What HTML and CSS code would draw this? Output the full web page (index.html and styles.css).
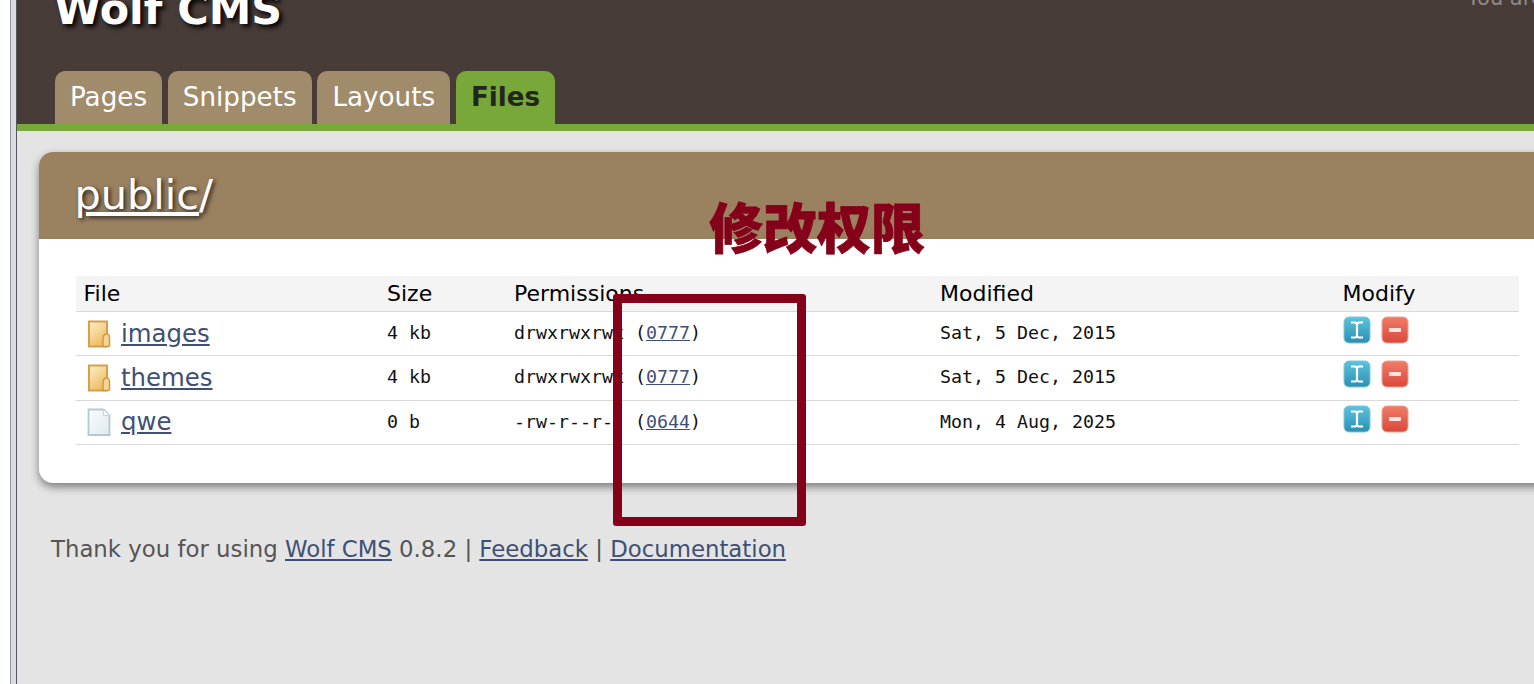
FILE: index.html
```html
<!DOCTYPE html>
<html>
<head>
  <meta charset="UTF-8">
  <title>Wolf CMS - Files</title>
  <link rel="stylesheet" href="styles.css">
</head>
<body>
<div class="gutter"></div>
<div class="page">
  <div class="header">
    <div class="top">
      <div class="logo">Wolf CMS</div>
      <div class="user">You are</div>
    </div>
    <div class="tabs">
      <a class="tab">Pages</a>
      <a class="tab">Snippets</a>
      <a class="tab">Layouts</a>
      <a class="tab current">Files</a>
    </div>
  </div>

  <div class="card">
    <h1 class="card-title"><a>public</a>/</h1>
    <div class="card-body">
      <table>
        <tr>
          <th class="c-file">File</th>
          <th class="c-size">Size</th>
          <th class="c-perm">Permissions</th>
          <th class="c-date">Modified</th>
          <th>Modify</th>
        </tr>
        <tr>
          <td><span class="name"><svg class="ficon" width="24" height="30" viewBox="0 0 24 30"><use href="#folder"/></svg><a>images</a></span></td>
          <td class="mono">4 kb</td>
          <td class="mono">drwxrwxrwx (<a>0777</a>)</td>
          <td class="mono">Sat, 5 Dec, 2015</td>
          <td><span class="actions"><svg class="aicon" width="28" height="28" viewBox="0 0 28 28"><use href="#rename"/></svg><svg class="aicon" width="28" height="28" viewBox="0 0 28 28"><use href="#remove"/></svg></span></td>
        </tr>
        <tr>
          <td><span class="name"><svg class="ficon" width="24" height="30" viewBox="0 0 24 30"><use href="#folder"/></svg><a>themes</a></span></td>
          <td class="mono">4 kb</td>
          <td class="mono">drwxrwxrwx (<a>0777</a>)</td>
          <td class="mono">Sat, 5 Dec, 2015</td>
          <td><span class="actions"><svg class="aicon" width="28" height="28" viewBox="0 0 28 28"><use href="#rename"/></svg><svg class="aicon" width="28" height="28" viewBox="0 0 28 28"><use href="#remove"/></svg></span></td>
        </tr>
        <tr>
          <td><span class="name"><svg class="ficon" width="24" height="30" viewBox="0 0 24 30"><use href="#doc"/></svg><a>qwe</a></span></td>
          <td class="mono">0 b</td>
          <td class="mono">-rw-r--r-- (<a>0644</a>)</td>
          <td class="mono">Mon, 4 Aug, 2025</td>
          <td><span class="actions"><svg class="aicon" width="28" height="28" viewBox="0 0 28 28"><use href="#rename"/></svg><svg class="aicon" width="28" height="28" viewBox="0 0 28 28"><use href="#remove"/></svg></span></td>
        </tr>
      </table>
    </div>
  </div>

  <p class="footer">Thank you for using <a>Wolf CMS</a> 0.8.2 | <a>Feedback</a> | <a>Documentation</a></p>
</div>

<!-- annotation drawn over the screenshot -->
<div class="note">修改权限</div>
<div class="note-box"></div>

<svg class="defs" width="0" height="0">
  <defs>
    <linearGradient id="gFolder" x1="0" y1="0" x2="0.6" y2="1">
      <stop offset="0" stop-color="#fdf0c8"/>
      <stop offset="1" stop-color="#edbb62"/>
    </linearGradient>
    <linearGradient id="gDoc" x1="0" y1="0" x2="1" y2="1">
      <stop offset="0" stop-color="#fbfcfd"/>
      <stop offset="1" stop-color="#dfe9ef"/>
    </linearGradient>
    <linearGradient id="gBlue" x1="0" y1="0" x2="0" y2="1">
      <stop offset="0" stop-color="#5cc4dc"/>
      <stop offset="1" stop-color="#2b8fb4"/>
    </linearGradient>
    <linearGradient id="gRed" x1="0" y1="0" x2="0" y2="1">
      <stop offset="0" stop-color="#f07c68"/>
      <stop offset="1" stop-color="#d9483a"/>
    </linearGradient>
    <symbol id="folder" viewBox="0 0 24 30">
      <path d="M2 2.500h18v25h-18z" fill="url(#gFolder)" stroke="#d6a045" stroke-width="2"/>
      <path d="M16 27.500v-7q0-5 3-5.500t3.500 3v8q0 1.500-2 1.500z" fill="#f3d596" stroke="#d19a3e" stroke-width="1.500"/>
    </symbol>
    <symbol id="doc" viewBox="0 0 24 30">
      <path d="M1.500 2.500h15l6 6v19.500h-21z" fill="url(#gDoc)" stroke="#b4c8d3" stroke-width="1.800"/>
      <path d="M16.500 2.500v6h6z" fill="#fff" stroke="#c6d5dd"/>
    </symbol>
    <symbol id="rename" viewBox="0 0 28 28">
      <rect x="1" y="1" width="26" height="26" rx="5" fill="url(#gBlue)" stroke="#7cc7d9" stroke-width="1"/>
      <path d="M8 6.500h4.500l1.500 1.500 1.500-1.500h4.500M14 8v12M8 21.500h4.500l1.500-1.500 1.500 1.500h4.500" fill="none" stroke="#fff" stroke-width="2.200"/>
    </symbol>
    <symbol id="remove" viewBox="0 0 28 28">
      <rect x="1" y="1" width="26" height="26" rx="5" fill="url(#gRed)" stroke="#f0a294" stroke-width="1"/>
      <rect x="8" y="12" width="12" height="4" rx="1" fill="#fbe4df"/>
    </symbol>
  </defs>
</svg>
</body>
</html>
```

FILE: styles.css
```css
html, body { height: 100%; }
body { margin: 0; display: flex; overflow: hidden; background: #fff; font-family: "DejaVu Sans", sans-serif; color: #000; }
a { color: #3f5075; text-decoration: underline; }

.gutter { width: 5px; margin-left: 10px; flex: none; background: #dcdce2; border-left: 1px solid #8d929c; border-right: 1px solid #55585c; }
.page { flex: 1; min-width: 0; background: #e4e4e5; }

.header { height: 124px; background: #483c38; border-bottom: 7px solid #78a83a; display: flex; flex-direction: column; justify-content: space-between; }
.top { display: flex; justify-content: space-between; height: 53px; overflow: hidden; }
.logo { margin: -16px 0 0 37px; font-size: 42.800px; line-height: 50px; font-weight: bold; color: #fff; text-shadow: 3px 3px 5px #000; white-space: nowrap; }
.user { margin: -14px -70px 0 0; width: 137px; font-size: 21px; line-height: 24px; color: #918a85; white-space: nowrap; }

.tabs { display: flex; gap: 5.800px; padding-left: 38px; }
.tab { padding: 0 15px; height: 53px; line-height: 52px; font-size: 26.200px; color: #fff; background: #a08c6b; border-radius: 10px 10px 0 0; text-decoration: none; }
.tab.current { background: #78a83a; color: #23261d; font-weight: bold; }

.card { margin: 21px -22px 0 22px; background: #fff; border-radius: 14px; box-shadow: 0 4px 8px rgba(0, 0, 0, 0.45); }
.card-title { margin: 0; height: 87px; padding-left: 35.500px; background: #9a8160; border-radius: 14px 14px 0 0; font-size: 41.400px; line-height: 86px; font-weight: normal; color: #fff; text-shadow: 2px 2px 4px #222; }
.card-title a { color: #fff; }
.card-body { padding: 37px 37px 38px; }

table { width: 100%; border-collapse: collapse; table-layout: fixed; }
th { height: 35px; padding: 0 7.500px; text-align: left; font-weight: normal; font-size: 22px; background: #f4f4f4; }
td { box-sizing: border-box; height: 44.300px; padding: 0 7.500px; font-size: 24.400px; line-height: 28px; border-top: 1px solid #d9d9d9; border-bottom: 1px solid #d9d9d9; }
.c-file { width: 288.500px; }
.c-size { width: 112px; }
.c-perm { width: 411px; }
.c-date { width: 387.500px; }
.mono { padding-bottom: 1px; font-family: "DejaVu Sans Mono", monospace; font-size: 18.300px; color: #111; }
.name { display: flex; align-items: center; gap: 10px; padding-left: 3.500px; }
.ficon { flex: none; filter: blur(0.4px); }
.actions { display: flex; gap: 10px; margin: -7px 0 0 0.500px; }
.aicon { filter: blur(0.4px); }

.footer { margin: 51px 0 0 34px; font-size: 22.820px; line-height: 30px; color: #555; white-space: nowrap; }

.note { position: absolute; left: 709px; top: 191px; font-family: "Noto Sans CJK SC", sans-serif; font-size: 54px; line-height: 70px; font-weight: 900; color: #850019; -webkit-text-stroke: 0.8px #850019; white-space: nowrap; }
.note-box { position: absolute; left: 613px; top: 294px; width: 193px; height: 232px; box-sizing: border-box; border: 9px solid #850019; border-radius: 3px; }
.defs { position: absolute; }
```
